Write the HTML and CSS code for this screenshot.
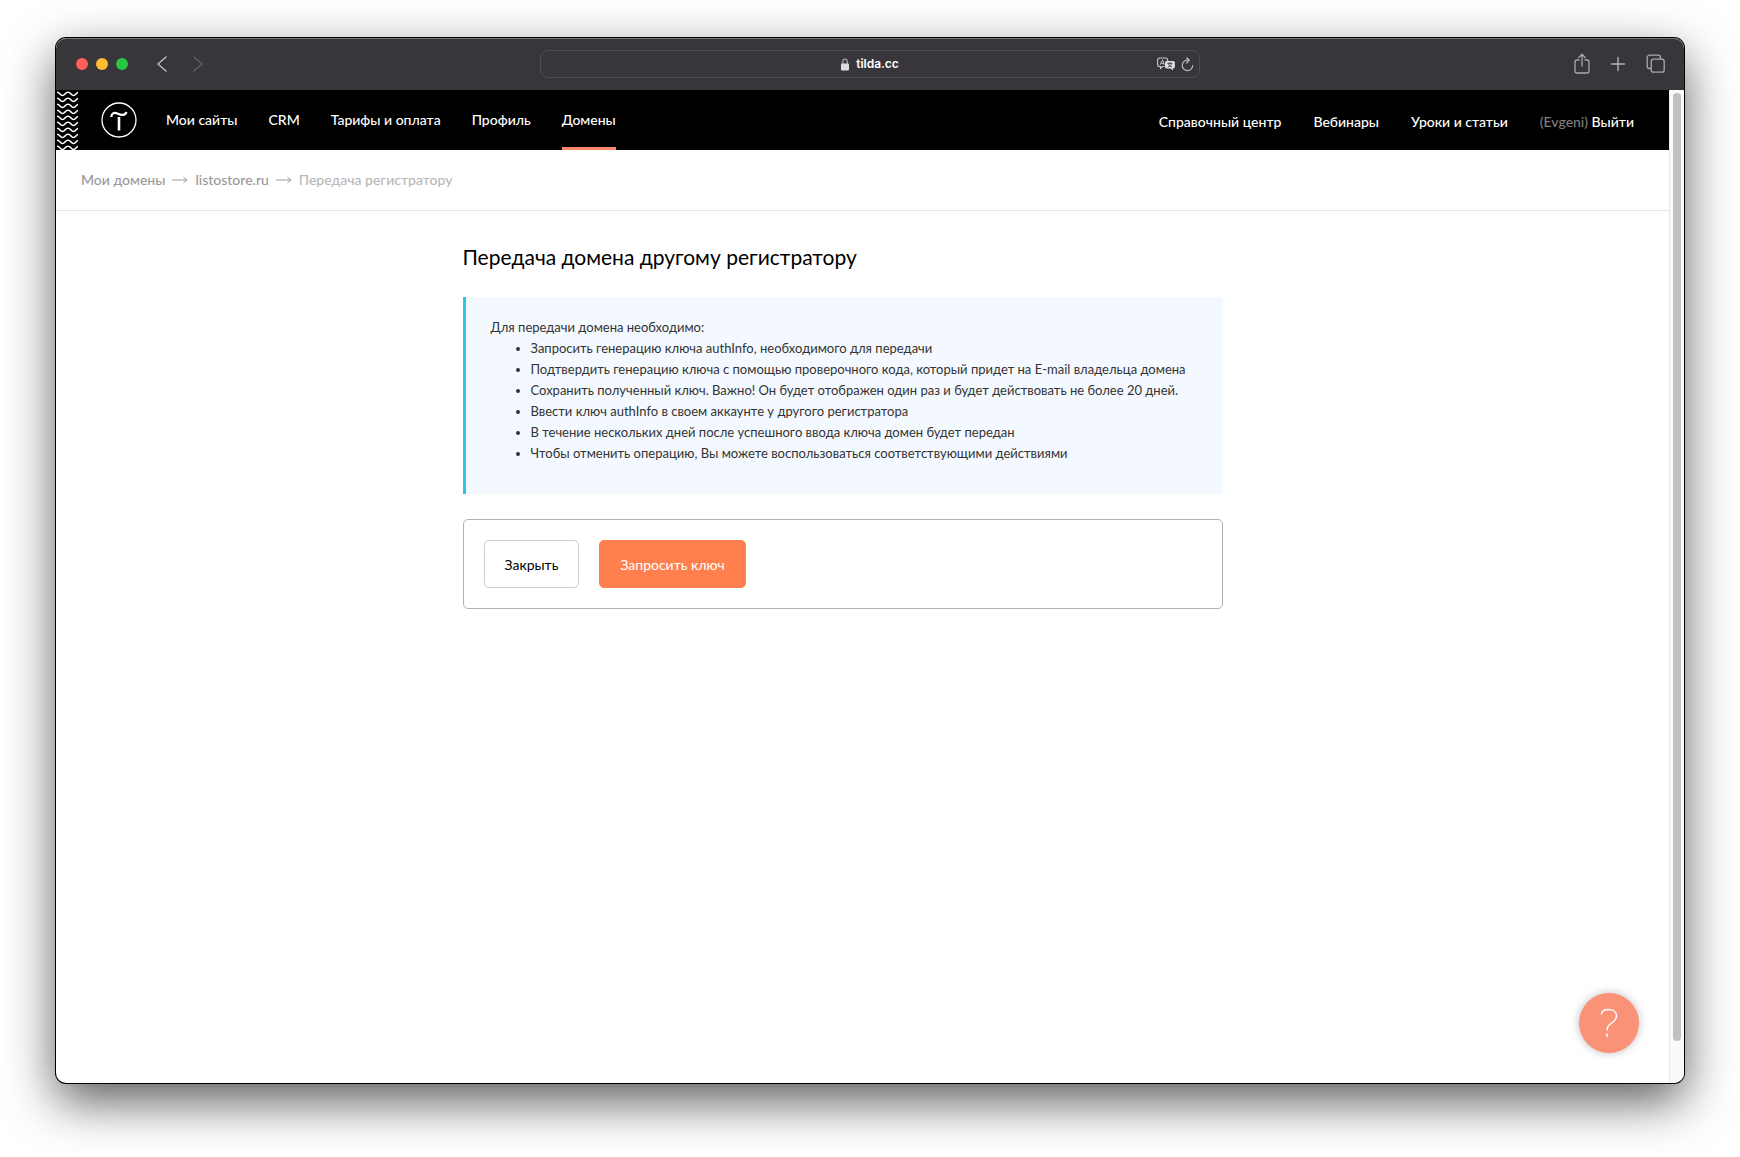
FILE: index.html
```
<!DOCTYPE html>
<html lang="ru">
<head>
<meta charset="utf-8">
<title>Передача регистратору</title>
<link rel="stylesheet" href="styles.css">
</head>
<body>
<div class="window">
  <header class="toolbar">
    <div class="toolbar-left">
      <span class="light light-close"></span>
      <span class="light light-min"></span>
      <span class="light light-max"></span>
      <button class="tool tool-back" type="button" aria-label="Назад">
        <svg width="12" height="18" viewBox="0 0 12 18"><path d="M10 2 2 9l8 7" fill="none" stroke="#b9b8bb" stroke-width="1.6" stroke-linecap="round" stroke-linejoin="round"/></svg>
      </button>
      <button class="tool tool-forward" type="button" aria-label="Вперёд">
        <svg width="12" height="18" viewBox="0 0 12 18"><path d="m2 2 8 7-8 7" fill="none" stroke="#5f5d62" stroke-width="1.6" stroke-linecap="round" stroke-linejoin="round"/></svg>
      </button>
    </div>
    <div class="address">
      <span class="address-text">
        <svg width="8" height="13" viewBox="0 0 8 13"><path d="M1.800 6V3.600C1.800 2 2.700 1 4 1s2.200 1 2.200 2.600V6" fill="none" stroke="#b4b3b6" stroke-width="1.200"/><rect y="5.500" width="8" height="7" rx="1" fill="#dededf"/></svg>
        tilda.cc
      </span>
      <span class="address-tools">
        <button class="tool" type="button" aria-label="Перевести">
          <svg width="18" height="14" viewBox="0 0 18 14"><path d="M7.500 9.500H5.500L3.500 11.500V9.500H2.600a2 2 0 0 1-2-2V3a2 2 0 0 1 2-2h6a2 2 0 0 1 2 2v1" fill="none" stroke="#c9c8cb" stroke-width="1.100"/><path d="M3.200 7.800 5.600 2.800l1.600 5M4.200 6.300h2.600" fill="none" stroke="#c9c8cb"/><path d="M9.700 4h6.500a1.700 1.700 0 0 1 1.700 1.700v4a1.700 1.700 0 0 1-1.700 1.700H15.700V13.500L13.500 11.400H9.700A1.700 1.700 0 0 1 8 9.700v-4A1.700 1.700 0 0 1 9.700 4z" fill="#dededf"/><path d="M10.400 6.300h5M12.900 5.200v1.100M11.300 6.500c.6 1.800 1.800 2.900 3.700 3.500M14.600 6.500c-.6 1.800-1.800 2.900-3.700 3.500" fill="none" stroke="#38363b" stroke-width=".9"/></svg>
        </button>
        <button class="tool" type="button" aria-label="Обновить">
          <svg width="13" height="15" viewBox="0 0 13 15"><path d="M7 3.200A5.200 5.200 0 1 0 11.700 8.500M5.600.8l2.700 2.500-2.700 2.700" fill="none" stroke="#b9b8bb" stroke-width="1.200" stroke-linecap="round" stroke-linejoin="round"/></svg>
        </button>
      </span>
    </div>
    <div class="toolbar-right">
      <button class="tool" type="button" aria-label="Поделиться">
        <svg width="16" height="22" viewBox="0 0 16 22"><path d="M5 7H3a2 2 0 0 0-2 2v9a2 2 0 0 0 2 2h10a2 2 0 0 0 2-2V9a2 2 0 0 0-2-2h-2M8 13V1.500M4.800 4.500 8 1.300 11.200 4.500" fill="none" stroke="#a9a8ab" stroke-width="1.300" stroke-linecap="round" stroke-linejoin="round"/></svg>
      </button>
      <button class="tool" type="button" aria-label="Новая вкладка">
        <svg width="16" height="16" viewBox="0 0 16 16"><path d="M8 1.500v13M1.500 8h13" fill="none" stroke="#b4b3b6" stroke-width="1.400" stroke-linecap="round"/></svg>
      </button>
      <button class="tool" type="button" aria-label="Обзор вкладок">
        <svg width="20" height="20" viewBox="0 0 20 20"><path d="M5 14.500H3.500a2.300 2.300 0 0 1-2.300-2.300V3.500a2.300 2.300 0 0 1 2.300-2.300h8.700a2.300 2.300 0 0 1 2.300 2.300V5" fill="none" stroke="#a9a8ab" stroke-width="1.300"/><rect x="5.200" y="5.200" width="13" height="13" rx="2.300" fill="none" stroke="#a9a8ab" stroke-width="1.300"/></svg>
      </button>
    </div>
  </header>

  <div class="viewport">
    <div class="page">
      <nav class="nav">
        <svg class="waves" width="21" height="59" aria-hidden="true">
          <defs><pattern id="wave" width="11" height="6" patternUnits="userSpaceOnUse"><path d="M-5.500 4.500C-3 4.500-3 1.300 0 1.300S3 4.500 5.500 4.500 8 1.300 11 1.300s3 3.200 5.500 3.200" fill="none" stroke="#fff" stroke-width="1.600"/></pattern></defs>
          <rect width="21" height="59" fill="url(#wave)"/>
        </svg>
        <a class="logo" href="#" aria-label="Tilda">
          <svg width="36" height="36" viewBox="0 0 36 36"><circle cx="18" cy="18" r="17" fill="none" stroke="#fff" stroke-width="1.300"/><path d="M10.300 15c.2-4 3-5 6.500-3.300 3.800 1.800 7.300 2 8.700-1.700" fill="none" stroke="#fff" stroke-width="2.200"/><path d="M18 15V28.500" stroke="#fff" stroke-width="2.600"/></svg>
        </a>
        <div class="menu">
          <a href="#">Мои сайты</a>
          <a href="#">CRM</a>
          <a href="#">Тарифы и оплата</a>
          <a href="#">Профиль</a>
          <a class="current" href="#">Домены</a>
        </div>
        <div class="menu menu-right">
          <a href="#">Справочный центр</a>
          <a href="#">Вебинары</a>
          <a href="#">Уроки и статьи</a>
          <span class="account"><span class="user">(Evgeni)</span> <a href="#">Выйти</a></span>
        </div>
      </nav>
      <div class="crumbs">
        <a href="#">Мои домены</a>
        <svg class="arrow" width="16" height="8" viewBox="0 0 16 8"><path d="M0 4h15M11.500 1.200 15 4l-3.500 2.800" fill="none" stroke="#999"/></svg>
        <a href="#">listostore.ru</a>
        <svg class="arrow" width="16" height="8" viewBox="0 0 16 8"><path d="M0 4h15M11.500 1.200 15 4l-3.500 2.800" fill="none" stroke="#999"/></svg>
        <span class="crumb-current">Передача регистратору</span>
      </div>
      <main class="content">
        <h1>Передача домена другому регистратору</h1>
        <section class="note">
          <p>Для передачи домена необходимо:</p>
          <ul>
            <li>Запросить генерацию ключа authInfo, необходимого для передачи</li>
            <li>Подтвердить генерацию ключа с помощью проверочного кода, который придет на E-mail владельца домена</li>
            <li>Сохранить полученный ключ. Важно! Он будет отображен один раз и будет действовать не более 20 дней.</li>
            <li>Ввести ключ authInfo в своем аккаунте у другого регистратора</li>
            <li>В течение нескольких дней после успешного ввода ключа домен будет передан</li>
            <li>Чтобы отменить операцию, Вы можете воспользоваться соответствующими действиями</li>
          </ul>
        </section>
        <div class="actions">
          <button class="btn" type="button">Закрыть</button>
          <button class="btn btn-primary" type="button">Запросить ключ</button>
        </div>
      </main>
      <button class="help" type="button" aria-label="Помощь">
        <svg width="18" height="30" viewBox="0 0 18 30"><path d="M1.500 6.500C1.500 3 4.500 1.500 8.500 1.500S16.500 3.500 16.500 8c0 3.500-2.500 5.500-5.500 7.500-3 2-4 3.500-4 7M7 25.500v3.500" fill="none" stroke="#fff" stroke-width="1.500"/></svg>
      </button>
    </div>
    <div class="scroll"><div class="thumb"></div></div>
  </div>
</div>
</body>
</html>
```
FILE: styles.css
```
* {
  box-sizing: border-box;
}

body {
  margin: 0;
  min-height: 100vh;
  padding: 38px 56px 74px;
  display: flex;
  background: #fff;
  font-family: Lato, "Open Sans", sans-serif;
  color: #000;
}

a {
  color: inherit;
  text-decoration: none;
}

svg {
  display: block;
}

.window {
  flex: 1;
  min-width: 0;
  display: flex;
  flex-direction: column;
  border-radius: 10px;
  overflow: hidden;
  background: #fff;
  box-shadow: 0 0 0 1px #000, 0 18px 50px rgba(0, 0, 0, 0.65);
}

/* Browser toolbar */
.toolbar {
  height: 52px;
  display: grid;
  grid-template-columns: 1fr minmax(0, 660px) 1fr;
  align-items: center;
  border-radius: 10px 10px 0 0;
  background: #38363b;
  box-shadow: inset 0 1px 0 #77757a;
}

.toolbar-left,
.toolbar-right {
  display: flex;
  align-items: center;
}

.toolbar-left {
  padding-left: 20px;
  gap: 8px;
}

.toolbar-right {
  justify-content: flex-end;
  padding-right: 18px;
  gap: 20px;
}

.light {
  width: 12px;
  height: 12px;
  border-radius: 50%;
}

.light-close { background: #ff5f57; }
.light-min { background: #febc2e; }
.light-max { background: #28c840; }

.tool {
  padding: 0;
  border: 0;
  background: none;
}

.tool-back { margin-left: 20px; }
.tool-forward { margin-left: 16px; }

.address {
  height: 28px;
  padding: 0 5px;
  display: grid;
  grid-template-columns: 1fr auto 1fr;
  align-items: center;
  border: 1px solid #4e4c51;
  border-radius: 8px;
}

.address-text {
  grid-column: 2;
  display: flex;
  align-items: center;
  gap: 7px;
  font: 600 12px/16px Inter, sans-serif;
  color: #fff;
}

.address-tools {
  display: flex;
  justify-content: flex-end;
  align-items: center;
  gap: 6px;
}

/* Page area */
.viewport {
  flex: 1;
  display: flex;
}

.page {
  flex: 1;
  min-width: 0;
  position: relative;
}

.scroll {
  width: 15px;
  padding: 3px 3px 42px 3px;
  border-left: 1px solid #e8e8e8;
  background: #fafafa;
  display: flex;
}

.thumb {
  flex: 1;
  border-radius: 4px;
  background: #c1c1c1;
}

.nav {
  height: 60px;
  padding: 0 35px 0 1px;
  display: flex;
  align-items: center;
  background: #000;
  color: #fff;
  font-size: 14px;
  font-weight: 500;
  line-height: 20px;
}

.logo {
  margin: 0 29px 0 23px;
}

.menu {
  display: flex;
  align-self: stretch;
  gap: 31px;
}

.menu > a {
  padding: 20px 0 17px;
  border-bottom: 3px solid transparent;
}

.menu > .current {
  border-color: #fa876b;
}

.menu-right {
  margin-left: auto;
  padding-top: 2px;
  gap: 32px;
}

.account {
  padding-top: 20px;
}

.user {
  color: #7f7f7f;
}

.crumbs {
  height: 61px;
  padding: 0 25px;
  display: flex;
  align-items: center;
  gap: 7px;
  border-bottom: 1px solid #e5e5e5;
  font-size: 14px;
  font-weight: 500;
  line-height: 20px;
  color: #999;
}

.crumb-current {
  color: #b8b8b8;
}

.content {
  max-width: 960px;
  margin: 0 auto;
  padding: 31px 120px 32px 80px;
}

h1 {
  margin: 0 0 25px;
  font-size: 21px;
  font-weight: 400;
  line-height: 30px;
}

.note {
  padding: 20px 25px 30px;
  border-left: 3px solid #2fc6e4;
  background: #f4f9ff;
  font-size: 13px;
  line-height: 21px;
  color: #333;
}

.note p {
  margin: 0;
}

.note ul {
  margin: 0;
  padding-left: 40px;
}

.actions {
  margin-top: 25px;
  padding: 20px;
  display: flex;
  gap: 20px;
  border: 1px solid #b2b2b2;
  border-radius: 5px;
}

.btn {
  height: 48px;
  padding: 0 20px;
  border: 1px solid #ccc;
  border-radius: 5px;
  background: #fff;
  font-family: inherit;
  font-size: 14px;
  color: #000;
}

.btn-primary {
  border-color: #ff7f4d;
  background: #ff7f4d;
  color: #fff;
}

.help {
  position: absolute;
  right: 30px;
  bottom: 30px;
  width: 60px;
  height: 60px;
  padding: 0;
  display: flex;
  align-items: center;
  justify-content: center;
  border: 0;
  border-radius: 50%;
  background: #fa9278;
  box-shadow: 0 0 10px rgba(0, 0, 0, 0.25);
}
```
